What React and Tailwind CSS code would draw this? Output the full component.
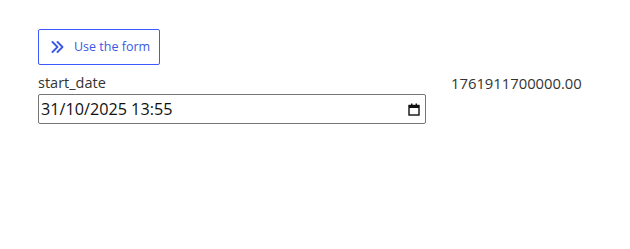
import React from "react";

const font = { fontFamily: '"Open Sans", "Noto Sans", "Liberation Sans", sans-serif' };

function Chevrons() {
  return (
    <svg width="13" height="12" viewBox="0 0 13 12" fill="none" stroke="currentColor" strokeWidth="1.8" strokeLinecap="round" strokeLinejoin="round">
      <path d="M1.5 1 L6.5 6 L1.5 11" />
      <path d="M6.5 1 L11.5 6 L6.5 11" />
    </svg>
  );
}

function CalendarIcon() {
  return (
    <svg width="12" height="13" viewBox="0 0 12 13" fill="none">
      <rect x="1" y="2.5" width="10" height="9.5" stroke="#111" strokeWidth="1.4" />
      <rect x="1" y="2.5" width="10" height="2.5" fill="#111" />
      <rect x="3" y="0.5" width="1.4" height="2.5" fill="#111" />
      <rect x="7.6" y="0.5" width="1.4" height="2.5" fill="#111" />
    </svg>
  );
}

export default function App() {
  return (
    <div className="w-[630px] h-[249px] bg-white text-[#333]" style={font}>
      <div className="pl-[38px] pt-[29px]">
        {/* action button */}
        <button
          type="button"
          className="flex items-center h-[36px] w-[122px] border border-[#3d5afe] rounded-[2px] text-[#3b57e6] text-[12.5px] pl-[12px] gap-[10px]"
        >
          <Chevrons />
          <span>Use the form</span>
        </button>

        {/* field row */}
        <div className="flex mt-[8px]">
          <div className="w-[388px]">
            <div className="text-[14.5px] leading-[20px] text-[#333]">start_date</div>
            <div className="mt-[1px] h-[30px] flex items-center justify-between border border-[#767676] rounded-[2px] pl-[2px] pr-[5px] text-[#111] text-[16.2px]">
              <span>31/10/2025 13:55</span>
              <CalendarIcon />
            </div>
          </div>
          <div className="ml-[25px] text-[14.8px] leading-[20px] text-[#333]">1761911700000.00</div>
        </div>
      </div>
    </div>
  );
}
